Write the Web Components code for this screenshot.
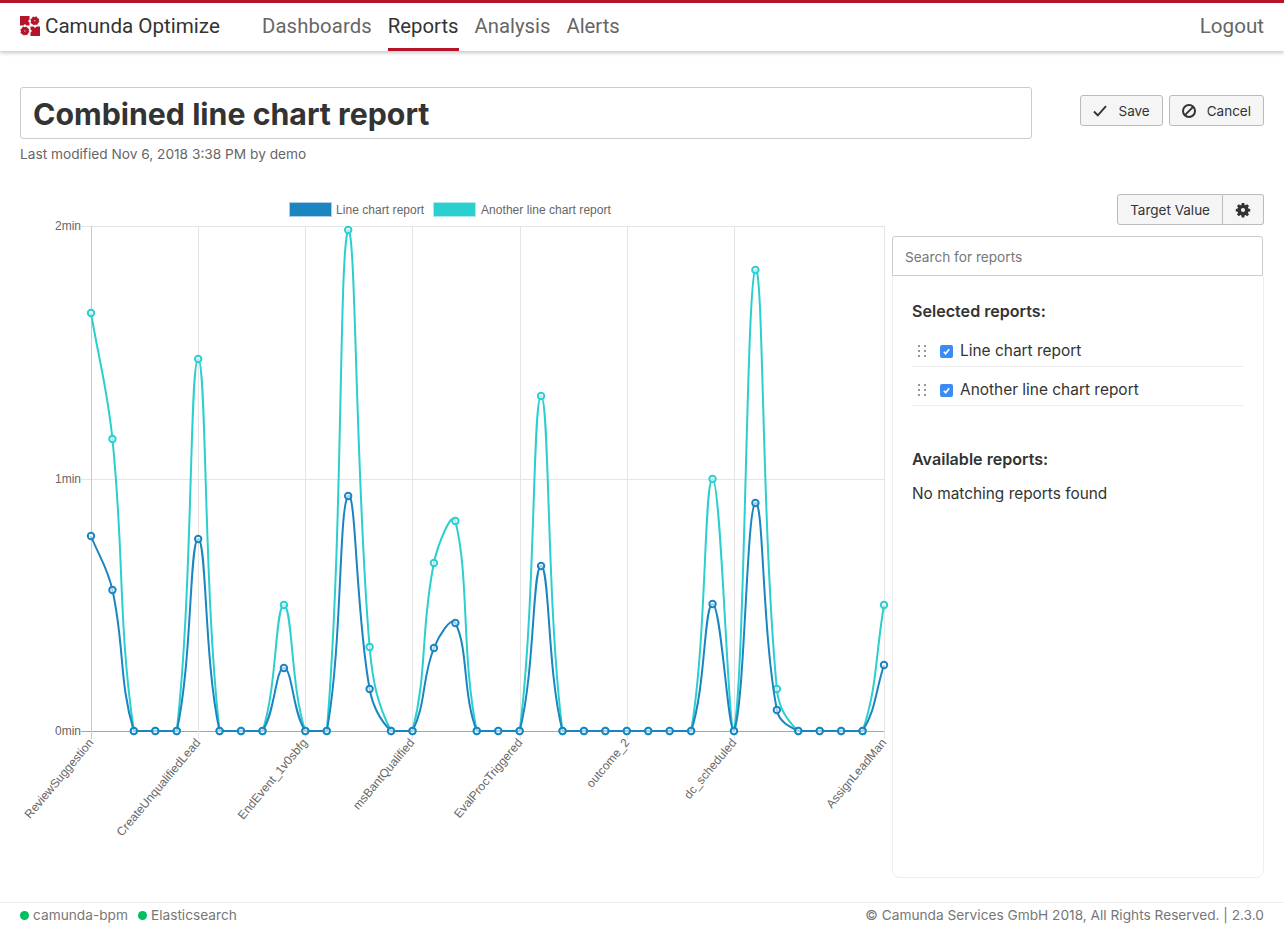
<!DOCTYPE html>
<html lang="en">

<head>
    <meta charset="UTF-8">
    <meta name="viewport" content="width=device-width, initial-scale=1.0">
    <title>Combined line chart report</title>
    <style>
        html,
        body {
            margin: 0;
            height: 100%;
            background: #fff;
        }

        body {
            display: flex;
            flex-direction: column;
            height: 927px;
            overflow: hidden;
            font-family: Inter, "Noto Sans", sans-serif;
            color: #333;
        }
    </style>
</head>

<body>
    <template id="logo-template">
        <style>
            :host {
                display: block;
                width: 20px;
                height: 20px;
            }

            svg {
                display: block;
            }

            .gear {
                stroke: #b5152b;
                stroke-width: 1.2;
                stroke-dasharray: 1.6 1.5;
            }
        </style>
        <svg width="20" height="20" viewBox="0 0 20 20" fill="#b5152b">
            <path d="M0 0H9.5V3.5L8 5 9.5 6.5V9.5H6.5L5 8 3.5 9.5H0Z" />
            <path d="M20 20H10.5V16.5L12 15 10.5 13.5V10.5H13.5L15 12 16.5 10.5H20Z" />
            <circle class="gear" cx="14.8" cy="4.8" r="3.9" />
            <circle class="gear" cx="4.8" cy="15" r="3.9" />
            <circle cx="14.8" cy="4.8" r=".7" fill="#e9b9c0" />
            <circle cx="4.8" cy="15" r=".7" fill="#e9b9c0" />
        </svg>
    </template>

    <template id="header-template">
        <style>
            :host {
                display: flex;
                flex: none;
                align-items: stretch;
                height: 48px;
                padding: 0 20px;
                border-top: 3px solid #b5152b;
                background: #fff;
                box-shadow: 0 2px 4px rgba(0, 0, 0, .22);
                font-family: Roboto, sans-serif;
                font-size: 20.6px;
                position: relative;
                z-index: 1;
            }

            .brand {
                display: flex;
                align-items: center;
                gap: 5px;
                width: 242px;
                color: #333;
                padding-bottom: 2px;
            }

            nav {
                display: flex;
                gap: 16px;
                font-size: 20.3px;
            }

            .logout {
                margin-left: auto;
                display: flex;
                align-items: center;
                color: #666;
                padding-bottom: 2px;
            }
        </style>
        <div class="brand"><co-logo></co-logo><span>Camunda Optimize</span></div>
        <nav><slot></slot></nav>
        <div class="logout">Logout</div>
    </template>

    <template id="nav-item-template">
        <style>
            :host {
                display: flex;
                align-items: center;
                border-bottom: 3px solid transparent;
                box-sizing: border-box;
                color: #666;
            }

            :host([active]) {
                color: #333;
                border-bottom-color: #b5152b;
            }
        </style>
        <slot></slot>
    </template>

    <template id="button-template">
        <style>
            :host {
                display: inline-flex;
                align-items: center;
                justify-content: center;
                gap: 11px;
                box-sizing: border-box;
                height: 31px;
                padding: 0 12px;
                border: 1px solid #bbb;
                border-radius: 3px;
                background: #f5f5f5;
                color: #333;
                font-family: Inter, sans-serif;
                font-size: 13.5px;
                white-space: nowrap;
            }

            ::slotted(svg) {
                display: block;
            }
        </style>
        <slot></slot>
    </template>

    <template id="title-bar-template">
        <style>
            :host {
                display: flex;
                flex: none;
                justify-content: space-between;
                align-items: flex-start;
                padding: 36px 20px 0;
            }

            .left {
                width: 1012px;
            }

            .title {
                box-sizing: border-box;
                height: 52px;
                line-height: 52px;
                padding: 0 12px;
                border: 1px solid #ccc;
                border-radius: 3px;
                color: #333;
                font-family: Inter, sans-serif;
                font-size: 30.3px;
                font-weight: 700;
            }

            .meta {
                margin-top: 7px;
                color: #666;
                font-family: Inter, sans-serif;
                font-size: 13.7px;
                line-height: 16px;
            }

            .actions {
                display: flex;
                gap: 6px;
                padding-top: 8px;
            }
        </style>
        <div class="left">
            <div class="title"><slot name="title"></slot></div>
            <div class="meta"><slot name="meta"></slot></div>
        </div>
        <div class="actions"><slot></slot></div>
    </template>

    <template id="chart-template">
        <style>
            :host {
                display: block;
                width: 892px;
                height: 700px;
                flex: none;
            }

            svg {
                display: block;
            }

            text {
                font-family: "Liberation Sans", Arial, sans-serif;
                font-size: 12px;
                fill: #666;
            }

            .legend {
                letter-spacing: .05px;
            }
        </style>
        <svg width="892" height="700" viewBox="0 194 892 700"></svg>
    </template>

    <template id="report-item-template">
        <style>
            :host {
                display: flex;
                align-items: center;
                height: 32px;
                margin-top: 3px;
                padding-top: 3px;
                border-bottom: 1px solid #eee;
                font-size: 15.45px;
                color: #333;
            }

            .grip {
                display: grid;
                grid-template-columns: 2px 2px;
                grid-auto-rows: 2px;
                gap: 3px 4px;
                margin: 1px 14px 0 6px;
            }

            .grip i {
                background: #777;
                border-radius: 50%;
            }

            .box {
                display: flex;
                align-items: center;
                justify-content: center;
                width: 13px;
                height: 13px;
                margin: 2px 7px 0 0;
                border-radius: 2px;
                background: #3b8bf5;
            }
        </style>
        <div class="grip"><i></i><i></i><i></i><i></i><i></i><i></i></div>
        <div class="box"><svg width="9" height="9" viewBox="0 0 9 9" fill="none" stroke="#fff" stroke-width="1.6"><path d="M1.8 4.8 3.6 6.8 7.2 2.2" /></svg></div>
        <slot></slot>
    </template>

    <template id="report-panel-template">
        <style>
            :host {
                display: flex;
                flex-direction: column;
                width: 372px;
                flex: none;
            }

            .tools {
                display: flex;
                justify-content: flex-end;
                height: 42px;
            }

            .search {
                box-sizing: border-box;
                height: 40px;
                width: 371px;
                line-height: 40px;
                padding: 0 12px;
                border: 1px solid #ccc;
                border-radius: 3px 3px 0 0;
                color: #777;
                font-size: 13.65px;
            }

            .panel {
                box-sizing: border-box;
                height: 602px;
                padding: 25px 19px 0;
                border: 1px solid #eee;
                border-top: 0;
                border-radius: 0 0 8px 8px;
                font-size: 15.4px;
            }

            h2 {
                margin: 0;
                font-size: 16.1px;
                font-weight: 600;
                line-height: 20px;
                color: #333;
            }

            .items {
                margin-top: 10px;
            }

            .second {
                margin-top: 43px;
            }

            p {
                margin: 15px 0 0;
                line-height: 20px;
                color: #333;
            }
        </style>
        <div class="tools"><slot name="tools"></slot></div>
        <div class="search">Search for reports</div>
        <div class="panel">
            <h2>Selected reports:</h2>
            <div class="items"><slot></slot></div>
            <h2 class="second">Available reports:</h2>
            <p>No matching reports found</p>
        </div>
    </template>

    <template id="button-group-template">
        <style>
            :host {
                display: inline-flex;
            }

            ::slotted(co-button) {
                border-radius: 0;
            }

            ::slotted(co-button:first-child) {
                border-radius: 3px 0 0 3px;
            }

            ::slotted(co-button:last-child) {
                border-radius: 0 3px 3px 0;
                border-left: 0;
            }
        </style>
        <slot></slot>
    </template>

    <template id="footer-template">
        <style>
            :host {
                display: flex;
                flex: none;
                justify-content: space-between;
                align-items: center;
                height: 24px;
                padding: 0 20px;
                border-top: 1px solid #eee;
                color: #777;
                font-family: Inter, sans-serif;
                font-size: 13.7px;
            }

            .status {
                display: flex;
                gap: 10px;
            }

            .status span {
                display: flex;
                align-items: center;
                gap: 4px;
            }

            .status i {
                width: 9px;
                height: 9px;
                border-radius: 50%;
                background: #00bf5f;
            }
        </style>
        <div class="status">
            <span><i></i>camunda-bpm</span>
            <span><i></i>Elasticsearch</span>
        </div>
        <div>© Camunda Services GmbH 2018, All Rights Reserved. | 2.3.0</div>
    </template>

    <script>
        function fromTemplate(id) {
            return class extends HTMLElement {
                constructor() {
                    super();
                    const shadow = this.attachShadow({ mode: 'open' });
                    shadow.appendChild(document.getElementById(id).content.cloneNode(true));
                }
            };
        }

        customElements.define('co-logo', fromTemplate('logo-template'));
        customElements.define('co-header', fromTemplate('header-template'));
        customElements.define('co-nav-item', fromTemplate('nav-item-template'));
        customElements.define('co-button', fromTemplate('button-template'));
        customElements.define('co-button-group', fromTemplate('button-group-template'));
        customElements.define('co-title-bar', fromTemplate('title-bar-template'));
        customElements.define('co-report-item', fromTemplate('report-item-template'));
        customElements.define('co-report-panel', fromTemplate('report-panel-template'));
        customElements.define('co-footer', fromTemplate('footer-template'));

        const NS = 'http://www.w3.org/2000/svg';
        const LEFT = 91, RIGHT = 884, TOP = 226, BOTTOM = 731;
        const STEP = (RIGHT - LEFT) / 37;
        const Z = BOTTOM;

        const SERIES = [
            {
                color: '#2bcfcf',
                ys: [313, 439, Z, Z, Z, 359, Z, Z, Z, 605, Z, Z, 230, 647, Z, Z, 563, 521, Z, Z, Z, 396, Z, Z, Z, Z, Z, Z, Z, 479, Z, 270, 689, Z, Z, Z, Z, 605]
            },
            {
                color: '#1a85c0',
                ys: [536, 590, Z, Z, Z, 539, Z, Z, Z, 668, Z, Z, 496, 689, Z, Z, 648, 623, Z, Z, Z, 566, Z, Z, Z, Z, Z, Z, Z, 604, Z, 503, 710, Z, Z, Z, Z, 665]
            }
        ];

        const LABELS = [
            [0, 'ReviewSuggestion'], [5, 'CreateUnqualifiedLead'], [10, 'EndEvent_1v0sbfg'], [15, 'msBantQualified'],
            [20, 'EvalProcTriggered'], [25, 'outcome_2'], [30, 'dc_scheduled'], [37, 'AssignLeadMan']
        ];

        // same spline as the chart library: tension .4, control points capped to the plot area
        function splinePath(points) {
            const clampY = y => Math.min(BOTTOM, Math.max(TOP, y));
            const clampX = x => Math.min(RIGHT, Math.max(LEFT, x));
            const ctrl = points.map((p, i) => {
                const prev = points[i - 1] || p, next = points[i + 1] || p;
                const d01 = Math.hypot(p.x - prev.x, p.y - prev.y);
                const d12 = Math.hypot(next.x - p.x, next.y - p.y);
                const total = d01 + d12 || 1;
                const fa = .4 * d01 / total, fb = .4 * d12 / total;
                return {
                    px: clampX(p.x - fa * (next.x - prev.x)), py: clampY(p.y - fa * (next.y - prev.y)),
                    nx: clampX(p.x + fb * (next.x - prev.x)), ny: clampY(p.y + fb * (next.y - prev.y))
                };
            });
            let d = `M${points[0].x} ${points[0].y}`;
            for (let i = 1; i < points.length; i++) {
                d += `C${ctrl[i - 1].nx} ${ctrl[i - 1].ny} ${ctrl[i].px} ${ctrl[i].py} ${points[i].x} ${points[i].y}`;
            }
            return d;
        }

        class CoChart extends HTMLElement {
            constructor() {
                super();
                const shadow = this.attachShadow({ mode: 'open' });
                shadow.appendChild(document.getElementById('chart-template').content.cloneNode(true));
            }

            connectedCallback() {
                const svg = this.shadowRoot.querySelector('svg');
                const add = (parent, name, attrs, text) => {
                    const el = document.createElementNS(NS, name);
                    Object.entries(attrs).forEach(([k, v]) => el.setAttribute(k, v));
                    if (text) el.textContent = text;
                    parent.appendChild(el);
                    return el;
                };

                // legend
                add(svg, 'rect', { x: 289.5, y: 202.5, width: 42, height: 14, fill: '#1a85c0', stroke: '#a9d0e8' });
                add(svg, 'text', { x: 336, y: 214, class: 'legend' }, 'Line chart report');
                add(svg, 'rect', { x: 433.5, y: 202.5, width: 42, height: 14, fill: '#2bcfcf', stroke: '#aaecec' });
                add(svg, 'text', { x: 481, y: 214, class: 'legend' }, 'Another line chart report');

                // horizontal grid and y axis labels
                [[TOP, '2min'], [479, '1min'], [BOTTOM, '0min']].forEach(([y, label]) => {
                    const stroke = y === BOTTOM ? '#a6a6a6' : '#e5e5e5';
                    add(svg, 'line', { x1: 81, x2: RIGHT, y1: y + .5, y2: y + .5, stroke });
                    add(svg, 'text', { x: 81, y: y + 4, 'text-anchor': 'end' }, label);
                });

                // vertical grid and rotated x axis labels
                LABELS.forEach(([i, label]) => {
                    const x = Math.round(LEFT + i * STEP);
                    add(svg, 'line', { x1: x + .5, x2: x + .5, y1: TOP, y2: 739, stroke: i === 0 ? '#c9c9c9' : '#e5e5e5' });
                    add(svg, 'text', {
                        'text-anchor': 'end',
                        transform: `translate(${x + 3} 743) rotate(-50)`
                    }, label);
                });

                SERIES.forEach(({ color, ys }) => {
                    const points = ys.map((y, i) => ({ x: LEFT + i * STEP, y }));
                    add(svg, 'path', { d: splinePath(points), fill: 'none', stroke: color, 'stroke-width': 2 });
                    points.forEach(p => add(svg, 'circle', {
                        cx: p.x, cy: p.y, r: 3.2, fill: 'rgba(255,255,255,.6)', stroke: color, 'stroke-width': 2
                    }));
                });
            }
        }

        customElements.define('co-chart', CoChart);
    </script>

    <co-header>
        <co-nav-item style="letter-spacing:.13px">Dashboards</co-nav-item>
        <co-nav-item active>Reports</co-nav-item>
        <co-nav-item>Analysis</co-nav-item>
        <co-nav-item>Alerts</co-nav-item>
    </co-header>

    <co-title-bar>
        <span slot="title">Combined line chart report</span>
        <span slot="meta">Last modified Nov 6, 2018 3:38 PM by demo</span>
        <co-button>
            <svg width="14" height="12" viewBox="0 0 14 12" fill="none" stroke="#333" stroke-width="1.9"><path d="M1 6.5 4.8 10.4 13 1.2" /></svg>
            Save
        </co-button>
        <co-button>
            <svg width="14" height="14" viewBox="0 0 14 14" fill="none" stroke="#333" stroke-width="2"><circle cx="7" cy="7" r="6" /><path d="M2.9 11.1 11.1 2.9" /></svg>
            Cancel
        </co-button>
    </co-title-bar>

    <main style="display:flex;flex:1;min-height:0;padding:0 20px 0 0;justify-content:space-between;margin-top:32px">
        <co-chart></co-chart>
        <co-report-panel>
            <co-button-group slot="tools">
                <co-button>Target Value</co-button>
                <co-button>
                    <svg width="16" height="16" viewBox="0 0 16 16" fill="#333"><path fill-rule="evenodd" d="M6.7 1h2.6l.3 1.9 1 .4 1.6-1.1 1.8 1.8-1.1 1.6.4 1 1.9.3v2.6l-1.9.3-.4 1 1.1 1.6-1.8 1.8-1.6-1.1-1 .4-.3 1.9H6.7l-.3-1.9-1-.4-1.6 1.1L2 12.4l1.1-1.6-.4-1-1.9-.3V6.9l1.9-.3.4-1L2 4l1.8-1.8 1.6 1.1 1-.4ZM8 6a2 2 0 1 0 0 4 2 2 0 0 0 0-4Z" /></svg>
                </co-button>
            </co-button-group>
            <co-report-item>Line chart report</co-report-item>
            <co-report-item>Another line chart report</co-report-item>
        </co-report-panel>
    </main>

    <co-footer></co-footer>
</body>

</html>
